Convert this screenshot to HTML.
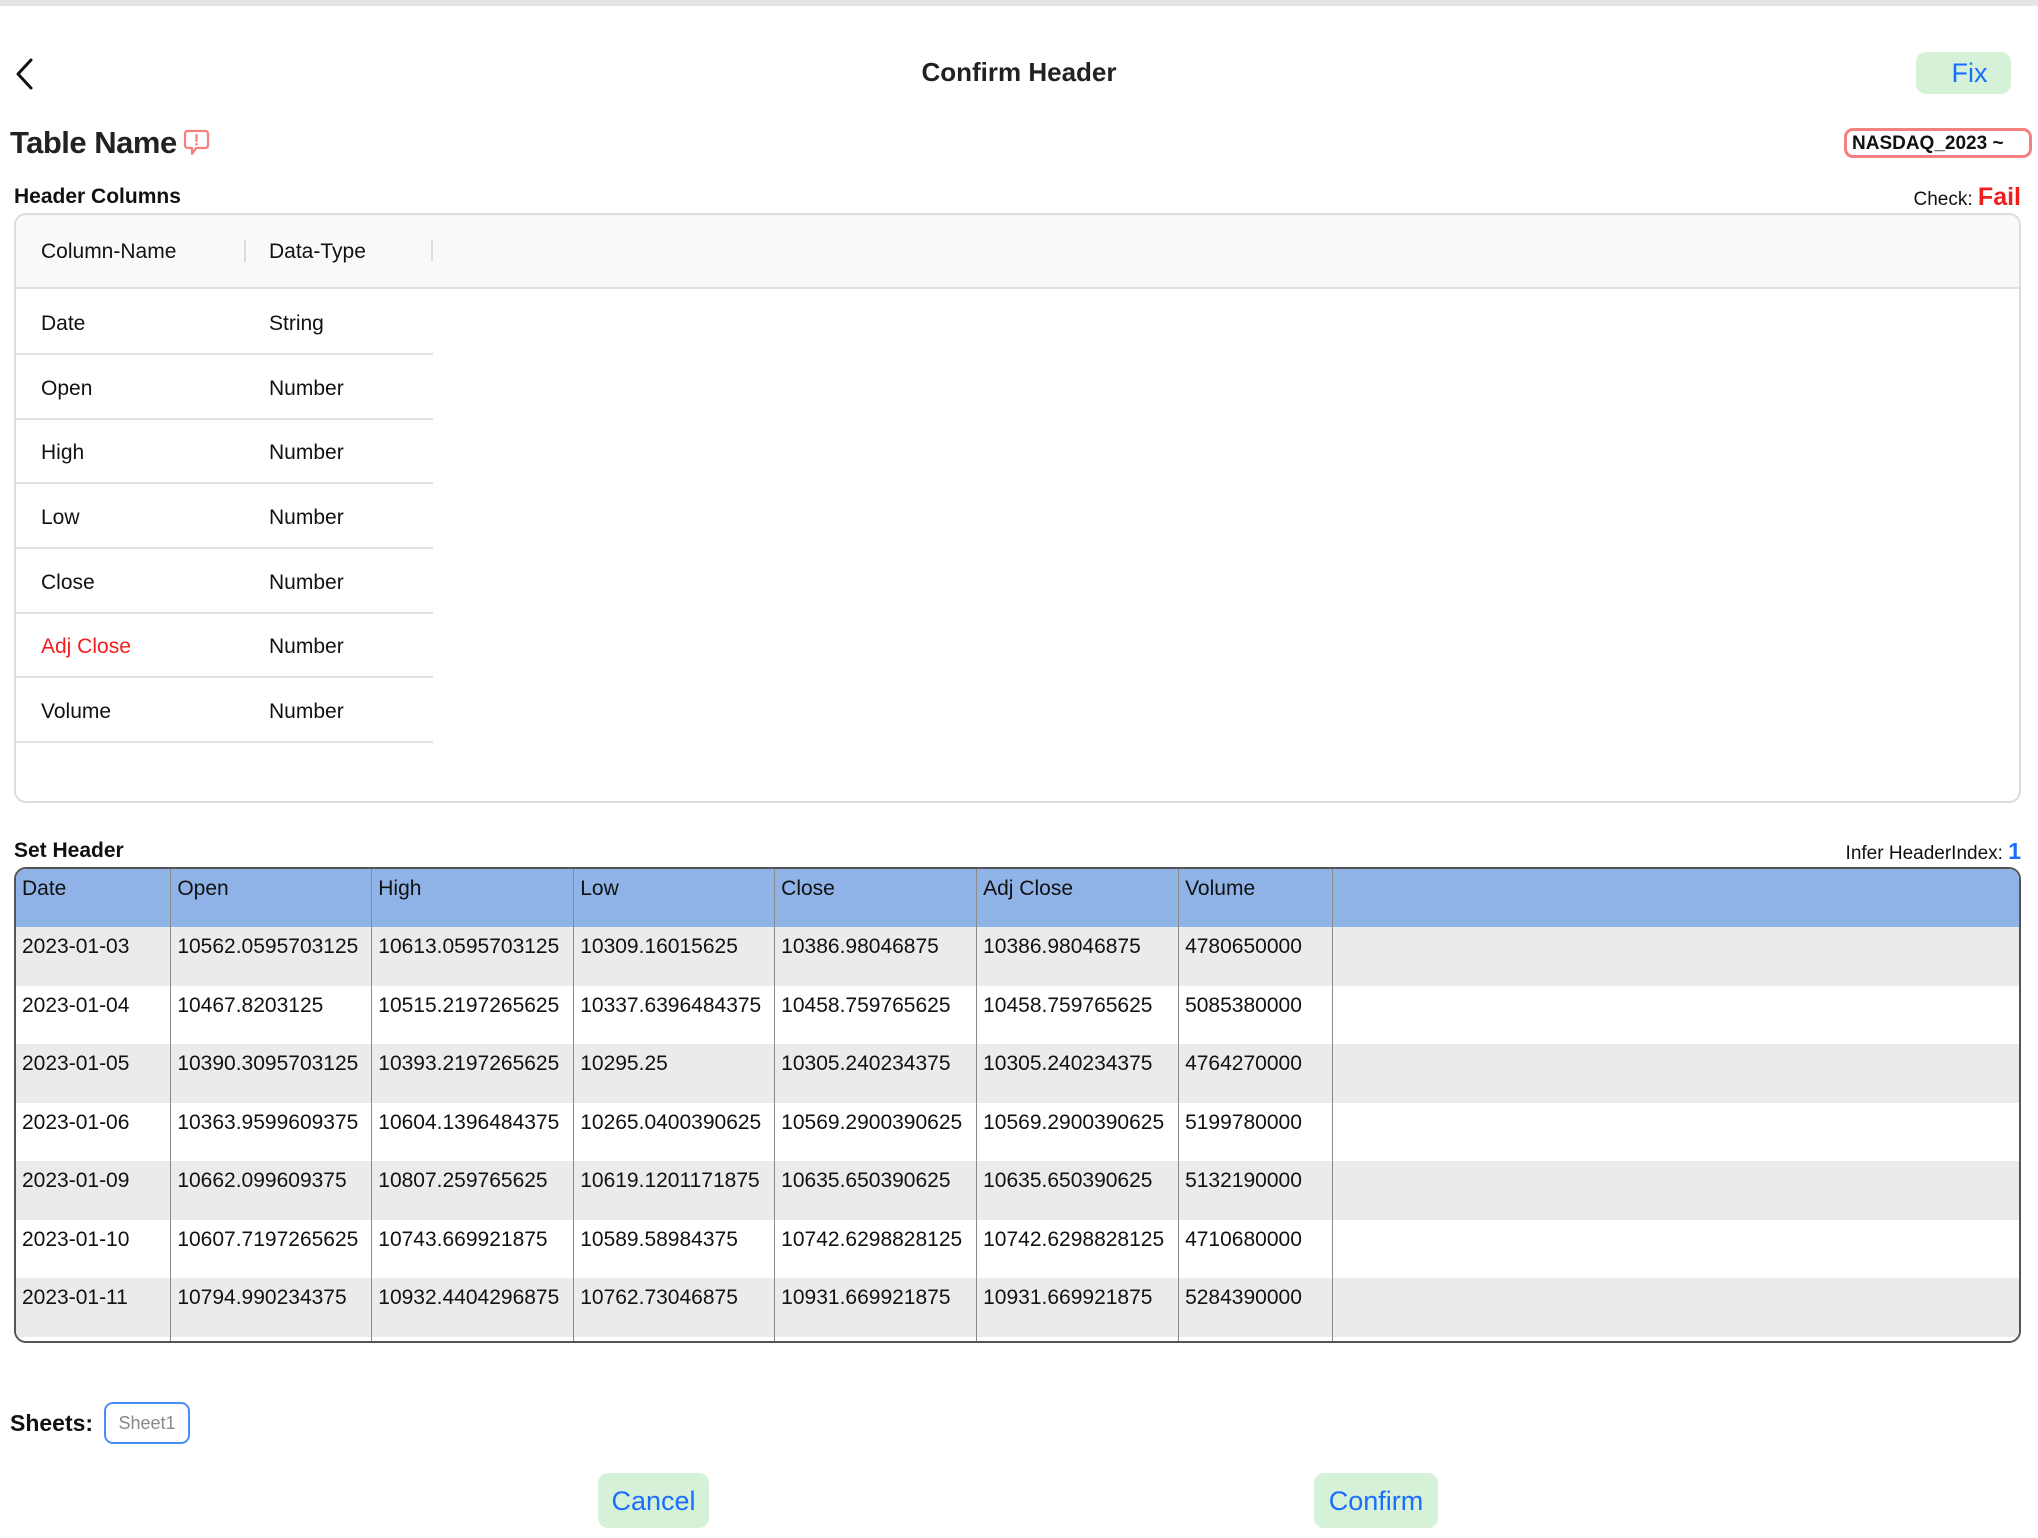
<!DOCTYPE html>
<html><head><meta charset="utf-8"><style>
*{box-sizing:border-box;margin:0;padding:0}
body{width:2038px;height:1538px;background:#fff;font-family:"Liberation Sans",Arial,sans-serif;color:#111;position:relative;overflow:hidden}
.a{position:absolute;white-space:nowrap}
.topbar{left:0;top:0;width:2038px;height:6px;background:#e4e4e4}
.hc{left:14px;top:213px;width:2007px;height:590px;border:2px solid #dcdcdc;border-radius:12px;overflow:hidden}
.hch{position:absolute;left:0;top:0;right:0;height:74px;background:#f8f9f9;border-bottom:2px solid #e0e0e0}
.cell{position:absolute;font-size:21px;line-height:24px}
.rowline{position:absolute;left:0;width:417px;height:2px;background:#e2e2e2}
.st{left:14px;top:867px;width:2007px;height:476px;border:2px solid #555;border-radius:12px;overflow:hidden;background:#fff}
.st table{border-collapse:collapse;font-size:21px;color:#111}
.st td,.st th{font-weight:normal;text-align:left;vertical-align:top;padding:8px 6px 0;height:58.5px;border-right:1px solid #8a8a8a;white-space:nowrap}
.st th{background:#8fb3e6;height:58px}
.st tr.g td{background:#ebebeb}
.btn{background:#d5f2d9;color:#1a6dff;font-size:27px;border-radius:10px;text-align:center}
</style></head><body>
<div class="a topbar"></div>
<svg class="a" style="left:14px;top:57px" width="22" height="34" viewBox="0 0 22 34"><path d="M17 3 L4 17 L17 31" fill="none" stroke="#111" stroke-width="3" stroke-linecap="round" stroke-linejoin="round"/></svg>
<div class="a" style="left:0;width:2038px;text-align:center;top:57px;font-size:26px;font-weight:bold;color:#222">Confirm Header</div>
<div class="a btn" style="left:1916px;top:52px;width:95px;height:42px;line-height:42px;padding-left:12px">Fix</div>
<div class="a" style="left:10px;top:125px;font-size:31px;font-weight:bold;color:#222;letter-spacing:-0.5px">Table Name</div>
<svg class="a" style="left:183px;top:129px" width="27" height="27" viewBox="0 0 27 27"><path d="M5 2 H22 Q25 2 25 5 V16 Q25 19 22 19 H13 L9 25 L9 19 H5 Q2 19 2 16 V5 Q2 2 5 2 Z" fill="none" stroke="#f47f7f" stroke-width="2.2" stroke-linejoin="round"/><line x1="13.5" y1="6" x2="13.5" y2="12" stroke="#f47f7f" stroke-width="2.2" stroke-linecap="round"/><circle cx="13.5" cy="15.3" r="1.3" fill="#f47f7f"/></svg>
<div class="a" style="left:1844px;top:128px;width:188px;height:30px;border:3.5px solid #f58080;border-radius:9px;font-size:19px;font-weight:bold;line-height:25px;padding-left:5px;color:#111">NASDAQ_2023 ~</div>
<div class="a" style="left:14px;top:185px;font-size:21px;font-weight:bold">Header Columns</div>
<div class="a" style="right:17px;top:183px;font-size:19px">Check: <span style="color:#f21d1d;font-weight:bold;font-size:25px">Fail</span></div>
<div class="a hc">
 <div class="hch">
  <div class="cell" style="left:25px;top:25px">Column-Name</div>
  <div style="position:absolute;left:228px;top:25px;width:2px;height:22px;background:#ddd"></div>
  <div class="cell" style="left:253px;top:25px">Data-Type</div>
  <div style="position:absolute;left:415px;top:25px;width:2px;height:22px;background:#ddd"></div>
 </div>
 <div class="cell" style="left:25px;top:97px">Date</div><div class="cell" style="left:253px;top:97px">String</div>
 <div class="rowline" style="top:138px"></div>
 <div class="cell" style="left:25px;top:162px">Open</div><div class="cell" style="left:253px;top:162px">Number</div>
 <div class="rowline" style="top:203px"></div>
 <div class="cell" style="left:25px;top:226px">High</div><div class="cell" style="left:253px;top:226px">Number</div>
 <div class="rowline" style="top:267px"></div>
 <div class="cell" style="left:25px;top:291px">Low</div><div class="cell" style="left:253px;top:291px">Number</div>
 <div class="rowline" style="top:332px"></div>
 <div class="cell" style="left:25px;top:356px">Close</div><div class="cell" style="left:253px;top:356px">Number</div>
 <div class="rowline" style="top:397px"></div>
 <div class="cell" style="left:25px;top:420px;color:#f21d1d">Adj Close</div><div class="cell" style="left:253px;top:420px">Number</div>
 <div class="rowline" style="top:461px"></div>
 <div class="cell" style="left:25px;top:485px">Volume</div><div class="cell" style="left:253px;top:485px">Number</div>
 <div class="rowline" style="top:526px"></div>
</div>
<div class="a" style="left:14px;top:839px;font-size:21px;font-weight:bold">Set Header</div>
<div class="a" style="right:17px;top:838px;font-size:19px">Infer HeaderIndex: <span style="color:#1a6dff;font-weight:bold;font-size:23px">1</span></div>
<div class="a st">
<table>
<colgroup><col style="width:155px"><col style="width:201px"><col style="width:202px"><col style="width:201px"><col style="width:202px"><col style="width:202px"><col style="width:154px"><col style="width:690px"></colgroup>
<tr><th>Date</th><th>Open</th><th>High</th><th>Low</th><th>Close</th><th>Adj Close</th><th>Volume</th><th style="border-right:none"></th></tr>
<tr class="g"><td>2023-01-03</td><td>10562.0595703125</td><td>10613.0595703125</td><td>10309.16015625</td><td>10386.98046875</td><td>10386.98046875</td><td>4780650000</td><td style="border-right:none"></td></tr>
<tr><td>2023-01-04</td><td>10467.8203125</td><td>10515.2197265625</td><td>10337.6396484375</td><td>10458.759765625</td><td>10458.759765625</td><td>5085380000</td><td style="border-right:none"></td></tr>
<tr class="g"><td>2023-01-05</td><td>10390.3095703125</td><td>10393.2197265625</td><td>10295.25</td><td>10305.240234375</td><td>10305.240234375</td><td>4764270000</td><td style="border-right:none"></td></tr>
<tr><td>2023-01-06</td><td>10363.9599609375</td><td>10604.1396484375</td><td>10265.0400390625</td><td>10569.2900390625</td><td>10569.2900390625</td><td>5199780000</td><td style="border-right:none"></td></tr>
<tr class="g"><td>2023-01-09</td><td>10662.099609375</td><td>10807.259765625</td><td>10619.1201171875</td><td>10635.650390625</td><td>10635.650390625</td><td>5132190000</td><td style="border-right:none"></td></tr>
<tr><td>2023-01-10</td><td>10607.7197265625</td><td>10743.669921875</td><td>10589.58984375</td><td>10742.6298828125</td><td>10742.6298828125</td><td>4710680000</td><td style="border-right:none"></td></tr>
<tr class="g"><td>2023-01-11</td><td>10794.990234375</td><td>10932.4404296875</td><td>10762.73046875</td><td>10931.669921875</td><td>10931.669921875</td><td>5284390000</td><td style="border-right:none"></td></tr>
<tr><td style="height:20px"></td><td></td><td></td><td></td><td></td><td></td><td></td><td style="border-right:none"></td></tr>
</table>
</div>
<div class="a" style="left:10px;top:1410px;font-size:23px;font-weight:bold">Sheets:</div>
<div class="a" style="left:104px;top:1402px;width:86px;height:42px;border:2px solid #4a8ef5;border-radius:9px;font-size:18px;color:#888;text-align:center;line-height:38px">Sheet1</div>
<div class="a btn" style="left:598px;top:1473px;width:111px;height:55px;line-height:57px">Cancel</div>
<div class="a btn" style="left:1314px;top:1473px;width:124px;height:55px;line-height:57px">Confirm</div>
</body></html>
